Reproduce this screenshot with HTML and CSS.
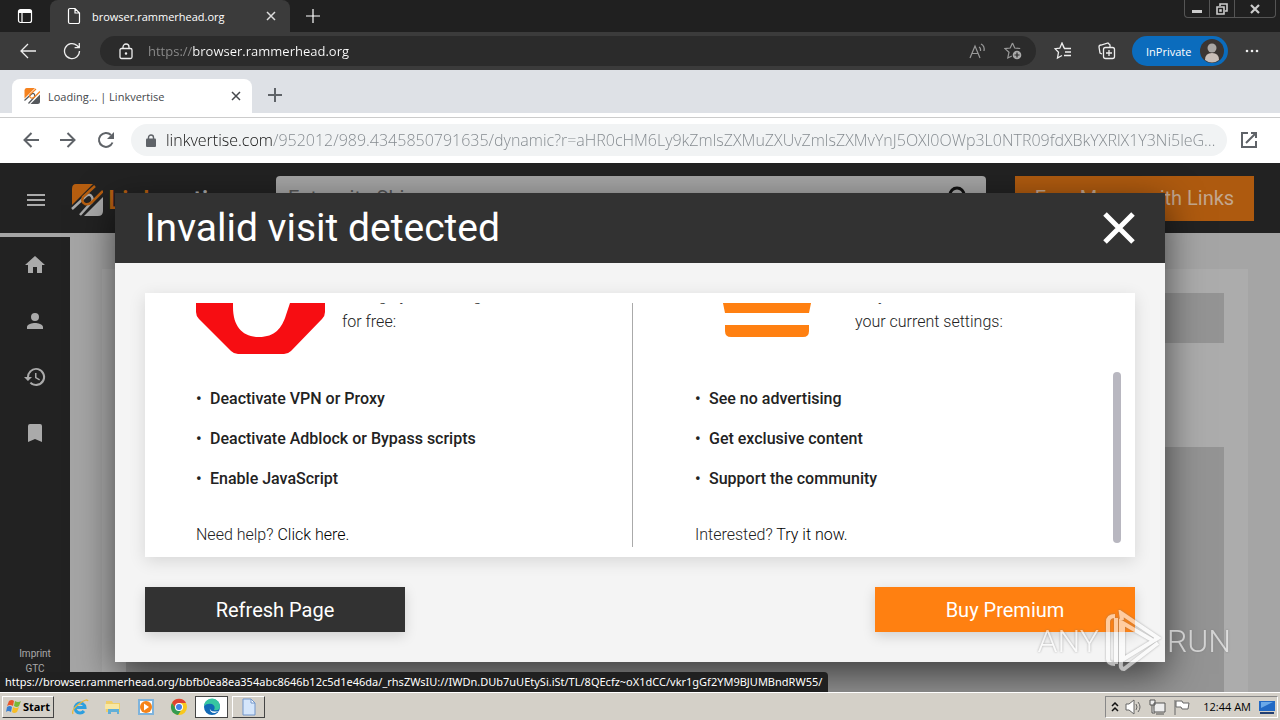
FILE: index.html
```
<!DOCTYPE html>
<html lang="en">
<head>
    <meta charset="UTF-8">
    <meta name="viewport" content="width=device-width, initial-scale=1.0">
    <title>Loading... | Linkvertise</title>
    <link rel="stylesheet" href="styles.css">
</head>
<body>

    <!-- Outer browser -->
    <div class="edge-tabs">
        <button class="edge-menu" aria-label="Tab actions">
            <svg width="16" height="16" viewBox="0 0 16 16" fill="none" stroke="#fff" stroke-width="1.2"><rect x="1.5" y="1.5" width="13" height="13" rx="2"/><path d="M2 3.5h12" stroke-width="3"/><path d="M5 5v9"/></svg>
        </button>
        <div class="edge-tab">
            <svg width="14" height="18" viewBox="0 0 14 18" fill="none" stroke="#fff" stroke-width="1.2"><path d="M1.5 3a1.5 1.5 0 0 1 1.500-1.500H8L12.500 6v9a1.500 1.500 0 0 1-1.500 1.500H3A1.500 1.500 0 0 1 1.500 15zM8 1.500V6h4.500"/></svg>
            <span class="tab-title">browser.rammerhead.org</span>
            <button aria-label="Close tab"><svg width="10" height="10" viewBox="0 0 10 10" stroke="#ddd" stroke-width="1.5"><path d="M1 1l8 8M9 1L1 9"/></svg></button>
        </div>
        <button class="edge-new" aria-label="New tab"><svg width="14" height="14" viewBox="0 0 14 14" stroke="#fff" stroke-width="1.2"><path d="M7 0v14M0 7h14"/></svg></button>
        <div class="window-buttons">
            <button aria-label="Minimize"><svg width="10" height="10" viewBox="0 0 10 10"><path d="M0 6h10v3H0z" fill="#ccc"/></svg></button>
            <button aria-label="Restore"><svg width="12" height="12" viewBox="0 0 12 12" fill="none" stroke="#ccc" stroke-width="1.6"><path d="M4 3V1h7v7H9"/><path d="M1 4h7v7H1z"/><path d="M4 7h1v1H4z"/></svg></button>
            <button class="window-close" aria-label="Close"><svg width="10" height="10" viewBox="0 0 10 10" stroke="#ccc" stroke-width="2.200"><path d="M1 1l8 8M9 1L1 9"/></svg></button>
        </div>
    </div>

    <div class="edge-bar">
        <button aria-label="Back"><svg width="18" height="16" viewBox="0 0 18 16" fill="none" stroke="#eee" stroke-width="1.300"><path d="M17 8H2M9 1L2 8l7 7"/></svg></button>
        <button aria-label="Reload"><svg width="18" height="18" viewBox="0 0 18 18" fill="none" stroke="#eee" stroke-width="1.300"><path d="M16.500 9A7.500 7.500 0 1 1 14 3.500L16 5.500M16.300 1v4.700h-4.700"/></svg></button>
        <div class="edge-address">
            <svg width="14" height="17" viewBox="0 0 14 17" fill="none" stroke="#eee" stroke-width="1.300"><rect x="1" y="5.500" width="12" height="10" rx="1.500"/><path d="M4 5.500V4a3 3 0 0 1 6 0v1.500"/><circle cx="7" cy="10.500" r=".6"/></svg>
            <input type="text" aria-label="Address" value="https://browser.rammerhead.org">
            <button aria-label="Read aloud"><svg width="17" height="16" viewBox="0 0 17 16" fill="none" stroke="#999" stroke-width="1.200"><path d="M1 15L6 3l5 12M3 10.500h6M10 4q2 1 1.500 4M12 1q4 2 3 7"/></svg></button>
            <button aria-label="Add to favorites"><svg width="18" height="18" viewBox="0 0 18 18" fill="none" stroke="#999" stroke-width="1.200"><path d="M8.500 1l2.200 5 5.500.5M8.500 1L6.200 6 1 6.600l4 3.600L3.800 16l4-2"/><circle cx="13" cy="13" r="4.300" fill="#aaa" stroke="none"/><path d="M13 10.500v5M10.500 13h5" stroke="#2b2b2b"/></svg></button>
        </div>
        <button aria-label="Favorites"><svg width="18" height="18" viewBox="0 0 18 18" fill="none" stroke="#eee" stroke-width="1.300"><path d="M10 6L8 1 5.800 6.200 1 6.700l3.500 3.600L3.500 16 8 13.500M8 1l2.500 5.500H17M11 10h6M10 13.500h7"/></svg></button>
        <button aria-label="Collections"><svg width="18" height="18" viewBox="0 0 18 18" fill="none" stroke="#eee" stroke-width="1.300"><path d="M4 12l-2-1L1 5q0-2 2-2l7-2 2 2v2"/><rect x="5.500" y="5.500" width="11" height="11" rx="2"/><path d="M11 8v6M8 11h6"/></svg></button>
        <button class="inprivate">InPrivate
            <svg width="24" height="24" viewBox="0 0 24 24"><circle cx="12" cy="12" r="12" fill="#3b3532"/><circle cx="12" cy="9" r="4.500" fill="#aaa6a3"/><path d="M5 21q0-7 7-7t7 7q-7 5-14 0" fill="#c9beb7"/></svg>
        </button>
        <button aria-label="Settings"><svg width="14" height="4" viewBox="0 0 14 4" fill="#eee"><circle cx="2" cy="2" r="1.300"/><circle cx="7" cy="2" r="1.300"/><circle cx="12" cy="2" r="1.300"/></svg></button>
    </div>

    <!-- Inner browser -->
    <div class="chrome-tabs">
        <div class="chrome-tab">
            <svg class="favicon" width="16" height="16" viewBox="0 0 32 32"><use href="#brand"/></svg>
            <span class="tab-title">Loading... | Linkvertise</span>
            <button aria-label="Close tab"><svg width="10" height="10" viewBox="0 0 10 10" stroke="#45484c" stroke-width="1.500"><path d="M1 1l8 8M9 1L1 9"/></svg></button>
        </div>
        <button class="chrome-new" aria-label="New tab"><svg width="14" height="14" viewBox="0 0 14 14" stroke="#5f6368" stroke-width="2"><path d="M7 0v14M0 7h14"/></svg></button>
    </div>
    <div class="chrome-bar">
        <button aria-label="Back"><svg width="16" height="16" viewBox="0 0 16 16" fill="none" stroke="#5f6368" stroke-width="2"><path d="M16 8H1.500M8.500 1l-7 7 7 7"/></svg></button>
        <button aria-label="Forward"><svg width="16" height="16" viewBox="0 0 16 16" fill="none" stroke="#5f6368" stroke-width="2"><path d="M0 8h14.500M7.500 1l7 7-7 7"/></svg></button>
        <button aria-label="Reload"><svg width="18" height="18" viewBox="0 0 18 18"><path d="M15.500 11.500A7 7 0 1 1 14 4" fill="none" stroke="#5f6368" stroke-width="2"/><path d="M17 1v7h-7z" fill="#5f6368"/></svg></button>
        <div class="chrome-address">
            <svg width="10" height="13" viewBox="0 0 10 13"><rect y="4.500" width="10" height="8.500" rx="1" fill="#5f6368"/><path d="M2.500 5V3.500a2.500 2.500 0 0 1 5 0V5" fill="none" stroke="#5f6368" stroke-width="1.400"/></svg>
            <input type="text" aria-label="Address" value="linkvertise.com/952012/989.4345850791635/dynamic?r=aHR0cHM6Ly9kZmlsZXMuZXUvZmlsZXMvYnJ5OXl0OWp3L0NTR09fdXBkYXRlX1Y3Ni5leGUvZmlsZXM">
        </div>
        <button aria-label="Open in new window"><svg width="18" height="18" viewBox="0 0 18 18" fill="none" stroke="#5f6368" stroke-width="2"><path d="M8 2H2v14h14v-6M11 2h5v5M16 2L6 12"/></svg></button>
    </div>

    <!-- Site -->
    <div class="site">
        <header class="site-header">
            <button class="menu" aria-label="Menu"><svg width="18" height="12" viewBox="0 0 18 12" fill="#aaa"><path d="M0 0h18v2H0zM0 5h18v2H0zM0 10h18v2H0z"/></svg></button>
            <a class="logo" href="#">
                <svg width="32" height="32" viewBox="0 0 32 32">
                    <g id="brand">
                        <path d="M5 0h17L1 21V5q0-5 4-5z" fill="var(--mark)"/>
                        <path d="M32 13v14q0 5-5 5H13z" fill="var(--mark-base)"/>
                        <path d="M1 25l14-13q4-3 6 1t-2 7L9 31" fill="none" stroke="var(--mark-base)" stroke-width="2.500"/>
                        <path d="M24 2L12 13q-2 5 2 7 4 1 7-2L32 7" fill="none" stroke="var(--mark)" stroke-width="2.500"/>
                    </g>
                </svg>
                <span>Linkver<span class="logo-light">tise</span></span>
            </a>
            <div class="search">
                <input type="search" aria-label="Search" placeholder="Enter site Shi ...">
                <svg width="20" height="24" viewBox="0 0 20 24" fill="none" stroke="#111" stroke-width="3"><circle cx="9" cy="9" r="7"/><path d="M14 14l5 5"/></svg>
            </div>
            <button class="earn">Earn Money with Links</button>
        </header>
        <div class="site-body">
            <nav class="sidebar">
                <a href="#" aria-label="Home"><svg width="24" height="24" viewBox="0 0 24 24"><path d="M10 20v-6h4v6h5v-8h3L12 3 2 12h3v8z"/></svg></a>
                <a href="#" aria-label="Profile"><svg width="24" height="24" viewBox="0 0 24 24"><path d="M12 12a4 4 0 1 0 0-8 4 4 0 0 0 0 8zm0 2c-2.700 0-8 1.300-8 4v2h16v-2c0-2.700-5.300-4-8-4z"/></svg></a>
                <a href="#" aria-label="History"><svg width="24" height="24" viewBox="0 0 24 24"><path d="M13 3a9 9 0 0 0-9 9H1l3.900 3.900.1.100L9 12H6a7 7 0 1 1 2.100 4.900l-1.400 1.400A9 9 0 1 0 13 3zm-1 5v5l4.300 2.500.7-1.200-3.500-2.100V8z"/></svg></a>
                <a href="#" aria-label="Bookmarks"><svg width="24" height="24" viewBox="0 0 24 24"><path d="M17 3H7a2 2 0 0 0-2 2v16l7-3 7 3V5a2 2 0 0 0-2-2z"/></svg></a>
                <div class="legal">
                    <a href="#">Imprint</a>
                    <a href="#">GTC</a>
                </div>
            </nav>
            <main class="content">
                <div class="panel">
                    <div class="skeleton skeleton-title"></div>
                    <div class="skeleton skeleton-body"></div>
                </div>
            </main>
        </div>

        <section class="modal" role="dialog" aria-labelledby="modal-title">
            <div class="modal-header">
                <h1 id="modal-title">Invalid visit detected</h1>
                <button aria-label="Close"><svg width="32" height="32" viewBox="0 0 32 32" stroke="#fff" stroke-width="5"><path d="M2 2l28 28M30 2L2 30"/></svg></button>
            </div>
            <div class="modal-body">
                <div class="card">
                    <div class="option">
                        <div class="intro">
                            <svg width="130" height="130" viewBox="0 0 130 130"><path d="M42 0h46l41 41v46q0 4-3 7L95 126q-3 3-7 3H42q-4 0-7-3L3 94q-3-3-3-7V41z" fill="#f70d12"/><path d="M37 30v52c0 20 10 30 26 30s23-9 27-22l20-60z" fill="#fff"/></svg>
                            <p>Change your settings<br>for free:</p>
                        </div>
                        <ul>
                            <li>Deactivate VPN or Proxy</li>
                            <li>Deactivate Adblock or Bypass scripts</li>
                            <li>Enable JavaScript</li>
                        </ul>
                        <p>Need help? <a href="#">Click here.</a></p>
                    </div>
                    <div class="option option-premium">
                        <div class="intro">
                            <svg width="144" height="130" viewBox="0 0 144 130" fill="#ff8011"><path d="M16 19l28 24 28-34 28 34 28-24-14 69H30z"/><path d="M30 100h84v6q0 6-6 6H36q-6 0-6-6z"/></svg>
                            <p>Stay with<br>your current settings:</p>
                        </div>
                        <ul>
                            <li>See no advertising</li>
                            <li>Get exclusive content</li>
                            <li>Support the community</li>
                        </ul>
                        <p>Interested? <a href="#">Try it now.</a></p>
                    </div>
                    <div class="scroll-thumb"></div>
                </div>
                <div class="actions">
                    <button class="refresh">Refresh Page</button>
                    <button class="premium">Buy Premium</button>
                </div>
            </div>
        </section>

        <div class="status">https://browser.rammerhead.org/bbfb0ea8ea354abc8646b12c5d1e46da/_rhsZWsIU://IWDn.DUb7uUEtySi.iSt/TL/8QEcfz~oX1dCC/vkr1gGf2YM9BJUMBndRW55/</div>
        <div class="watermark">
            <span>ANY</span>
            <svg width="58" height="62" viewBox="0 0 58 62" fill="none" stroke="#fff" stroke-width="4"><path d="M11 6Q4 6 4 12v37q0 5 7 5M12 8v46M19 12v38M18 10l-1-7L54 28 18 50M54 33L20 59q-4 0-3-6V12l31 18"/></svg>
            <span>RUN</span>
        </div>
    </div>

    <!-- Taskbar -->
    <footer class="taskbar">
        <button class="start"><svg width="16" height="16" viewBox="0 0 16 16"><path d="M3 2q3-2 5 0L7 7Q4 5 1 7z" fill="#e8562a"/><path d="M9 2q3 2 6 0l-2 5q-2 2-5 0z" fill="#79b837"/><path d="M1 8q3-2 5 0l-1 5q-3-2-5 0z" fill="#3a7fd0"/><path d="M7 8q3 2 6 0l-2 5q-3 2-5 0z" fill="#f7bd25"/></svg>Start</button>
        <button class="task" aria-label="Internet Explorer"><svg width="18" height="18" viewBox="0 0 18 18" fill="none"><path d="M4 9.500h10A5 5 0 1 0 13 13" stroke="#2e9fdf" stroke-width="3"/><path d="M2 16Q0 12 8 6t9-3" stroke="#eab83a" stroke-width="1.300"/></svg></button>
        <button class="task" aria-label="Explorer"><svg width="18" height="18" viewBox="0 0 18 18"><path d="M2 3h6l1 2h7v9H2z" fill="#f0ce68"/><path d="M1 6h14v5H1z" fill="#f8e7a3"/><path d="M4 16v-5h11v5h-2v-2H7v2z" fill="#62afd7"/></svg></button>
        <button class="task" aria-label="Media Player"><svg width="18" height="18" viewBox="0 0 18 18"><rect x="1" y="1" width="16" height="16" fill="#7eb3dc"/><rect x="3" y="3" width="12" height="12" fill="#fff"/><circle cx="9" cy="9" r="6" fill="#f58318"/><path d="M7 5.500l5 3.500-5 3.500z" fill="#fff"/></svg></button>
        <button class="task" aria-label="Chrome"><svg width="18" height="18" viewBox="0 0 18 18"><circle cx="9" cy="9" r="8" fill="#f9c81d"/><path d="M2 5a8 8 0 0 1 14 0H9L6 11z" fill="#df4332"/><path d="M2 5a8 8 0 0 0 6 12l4-6H6z" fill="#349b50"/><circle cx="9" cy="9" r="4" fill="#fff"/><circle cx="9" cy="9" r="3" fill="#4280e8"/></svg></button>
        <button class="task task-active" aria-label="Edge"><svg width="18" height="18" viewBox="0 0 18 18"><circle cx="9" cy="9" r="8" fill="#1269b7"/><path d="M1 8a8 8 0 0 1 16 1q-1 4-6 3 2-4-2-6-5-1-8 2z" fill="#37c6a1"/><path d="M7 9q-1 6 9 4l-4 2Q6 15 7 9z" fill="#fff"/></svg></button>
        <button class="task task-open" aria-label="Document"><svg width="16" height="18" viewBox="0 0 16 18"><path d="M2 1h8l4 4v12H2z" fill="#d5e6fb" stroke="#7095ca"/><path d="M10 1v4h4z" fill="#fff" stroke="#7095ca"/></svg></button>
        <div class="tray">
            <svg width="8" height="10" viewBox="0 0 8 10" fill="none" stroke="#111" stroke-width="1.500"><path d="M1 4l3-3 3 3M1 9l3-3 3 3"/></svg>
            <svg width="18" height="16" viewBox="0 0 18 16" fill="#fff" stroke="#666"><path d="M1 5h3l5-4v14l-5-4H1z"/><path d="M11 5q2 3 0 6M13 3q4 5 0 10" fill="none"/></svg>
            <svg width="18" height="16" viewBox="0 0 18 16" fill="#eee" stroke="#555"><path d="M5 4h11v9H5zM7 15h8M1 1h5v5H1zM3 6v8h3"/></svg>
            <svg width="18" height="16" viewBox="0 0 18 16" fill="#fff" stroke="#666"><path d="M2 1v15M3 2h6l1 2h6l-1 6H9L8 8H3z"/></svg>
            <span class="clock">12:44 AM</span>
            <svg width="16" height="14" viewBox="0 0 16 14"><path d="M0 1h16v10H0z" fill="#2169c5"/><path d="M2 2h12L2 8z" fill="#69a8e9"/><path d="M1 12h14v2H1z" fill="#223f72"/></svg>
        </div>
    </footer>

</body>
</html>
```
FILE: styles.css
```
/* Global Styles */
* {
    box-sizing: border-box;
}

body {
    display: flex;
    flex-direction: column;
    height: 100vh;
    margin: 0;
    font-family: "Open Sans", "Noto Sans", sans-serif;
    font-size: 11px;
    overflow: hidden;
}

button, input {
    font: inherit;
    color: inherit;
    border: none;
    background: none;
    padding: 0;
    outline: none;
}

button {
    display: flex;
    align-items: center;
    justify-content: center;
    flex-shrink: 0;
}

svg {
    display: block;
    flex-shrink: 0;
}

a {
    color: inherit;
    text-decoration: none;
}

.tab-title {
    flex: 1;
    white-space: nowrap;
}

/* Outer browser */
.edge-tabs {
    display: flex;
    flex-shrink: 0;
    height: 32px;
    background: #202020;
    color: #fff;
}

.edge-menu {
    width: 50px;
}

.edge-tab {
    display: flex;
    align-items: center;
    gap: 11px;
    width: 240px;
    padding: 0 14px 0 17px;
    background: #3b3b3b;
    border-radius: 8px 8px 0 0;
}

.edge-new {
    width: 46px;
}

.window-buttons {
    display: flex;
    height: 18px;
    margin: 0 4px 0 auto;
    border: 1px solid #555;
    border-top: none;
    border-radius: 0 0 4px 4px;
}

.window-buttons button {
    width: 25px;
    border-right: 1px solid #555;
}

.window-buttons .window-close {
    width: 40px;
    border-right: none;
}

.edge-bar {
    display: flex;
    flex-shrink: 0;
    align-items: center;
    gap: 26px;
    height: 38px;
    padding: 0 21px 0 19px;
    background: #3b3b3b;
    color: #fff;
}

.edge-address {
    display: flex;
    flex: 1;
    align-items: center;
    gap: 18px;
    height: 30px;
    margin: 0 -8px 0 -7px;
    padding: 0 14px 0 19px;
    border-radius: 15px;
    background: #2b2b2b;
}

.edge-address input {
    flex: 1;
    min-width: 0;
    margin-left: -3px;
    font-size: 13px;
    color: transparent;
    background: linear-gradient(90deg, #8c8c8c 45px, #fff 45px);
    -webkit-background-clip: text;
    background-clip: text;
}

.inprivate {
    justify-content: space-between;
    width: 96px;
    height: 30px;
    margin: 0 -9px 0 -10px;
    padding: 0 4px 0 14px;
    border-radius: 15px;
    background: #0b6cbd;
}

/* Inner browser */
.chrome-tabs {
    display: flex;
    flex-shrink: 0;
    align-items: flex-end;
    height: 43px;
    padding-left: 12px;
    background: #dee1e6;
    color: #45484c;
}

.chrome-tab {
    display: flex;
    align-items: center;
    gap: 8px;
    width: 240px;
    height: 34px;
    padding: 0 11px 0 12px;
    background: #fff;
    border-radius: 8px 8px 0 0;
}

.favicon {
    --mark: #f5821f;
    --mark-base: #55585c;
}

.chrome-new {
    width: 46px;
    height: 36px;
}

.chrome-bar {
    display: flex;
    flex-shrink: 0;
    align-items: center;
    gap: 21px;
    height: 50px;
    padding: 0 22px 0 23px;
    border-top: 4px solid #fff;
    background: #fff;
    box-shadow: inset 0 1px #ccc;
}

.chrome-address {
    display: flex;
    flex: 1;
    align-items: center;
    gap: 10px;
    height: 32px;
    margin: 0 -8px 0 -5px;
    padding: 0 8px 0 15px;
    border-radius: 16px;
    background: #f1f3f4;
}

.chrome-address input {
    flex: 1;
    min-width: 0;
    font-size: 16px;
    font-weight: 300;
    color: transparent;
    text-overflow: ellipsis;
    background: linear-gradient(90deg, #111 106px, #80868b 106px);
    -webkit-background-clip: text;
    background-clip: text;
}

/* Site */
.site {
    position: relative;
    display: flex;
    flex: 1;
    flex-direction: column;
    min-height: 0;
    background: #a5a5a5;
    font-family: Roboto, sans-serif;
    overflow: hidden;
}

.site-header {
    display: flex;
    flex-shrink: 0;
    align-items: center;
    height: 70px;
    padding: 0 26px 0 27px;
    background: #222;
}

.menu, .logo {
    margin-top: 4px;
}

.logo {
    --mark: #b65e10;
    --mark-base: #a9a9a9;
    display: flex;
    align-items: center;
    gap: 5px;
    width: 205px;
    margin-left: 26px;
    font-size: 26px;
    font-weight: 500;
    color: #b65e10;
}

.logo-light {
    color: #aaa;
}

.search {
    display: flex;
    flex: 1;
    align-items: center;
    height: 44px;
    margin-right: 29px;
    padding: 0 18px 0 12px;
    border-radius: 4px;
    background: #a5a5a5;
}

.search input {
    flex: 1;
    font-size: 20px;
}

.search input::placeholder {
    color: #555;
}

.earn {
    width: 239px;
    height: 45px;
    background: #ae5a0f;
    color: #c3a78e;
    font-size: 20px;
}

.site-body {
    display: flex;
    flex: 1;
    min-height: 0;
}

.sidebar {
    display: flex;
    flex-direction: column;
    align-items: center;
    gap: 32px;
    width: 70px;
    margin-top: 4px;
    padding: 16px 0;
    background: #222;
    fill: #aaa;
}

.legal {
    display: flex;
    flex-direction: column;
    align-items: center;
    margin-top: auto;
    color: #aaa;
    font-size: 10px;
    line-height: 15px;
}

.content {
    display: flex;
    flex: 1;
    padding: 36px 32px 0;
}

.panel {
    display: flex;
    flex: 1;
    flex-direction: column;
    gap: 104px;
    padding: 24px 24px 0;
    background: #acacac;
}

.skeleton {
    background: #949494;
}

.skeleton-title {
    height: 50px;
}

.skeleton-body {
    flex: 1;
}

/* Modal */
.modal {
    position: absolute;
    top: 30px;
    left: 115px;
    right: 115px;
    background: #f4f4f4;
    color: #222;
    box-shadow: 0 12px 36px rgba(0, 0, 0, 0.6);
}

.modal-header {
    display: flex;
    align-items: center;
    justify-content: space-between;
    height: 70px;
    padding: 0 30px;
    background: #323232;
    color: #fff;
}

.modal-header h1 {
    margin: 0;
    font-size: 39px;
    font-weight: 400;
}

.modal-body {
    padding: 30px;
}

.card {
    position: relative;
    display: flex;
    height: 264px;
    padding: 10px;
    background: #fff;
    box-shadow: 0 4px 16px rgba(0, 0, 0, 0.12);
    font-size: 16px;
    line-height: 24px;
}

.option {
    display: flex;
    flex-direction: column;
    justify-content: flex-end;
    gap: 24px;
    width: 478px;
    padding-left: 41px;
    border-right: 1px solid #aaa;
    font-weight: 300;
    overflow: hidden;
}

.option-premium {
    flex: 1;
    padding-left: 62px;
    border-right: none;
}

.option p {
    margin: 0;
}

.option a {
    color: #000;
}

.intro {
    display: flex;
    align-items: flex-end;
    gap: 16px;
}

.intro p {
    padding-bottom: 20px;
    line-height: 26px;
}

.option ul {
    margin: 0;
    padding: 0;
    list-style: none;
    font-weight: 500;
    line-height: 40px;
}

.option li::before {
    content: "•";
    display: inline-block;
    width: 14px;
}

.scroll-thumb {
    position: absolute;
    right: 14px;
    bottom: 14px;
    width: 8px;
    height: 171px;
    border-radius: 4px;
    background: #b8b7c0;
}

.actions {
    display: flex;
    justify-content: space-between;
    margin-top: 30px;
}

.actions button {
    width: 260px;
    height: 45px;
    color: #fff;
    font-size: 20px;
    box-shadow: 0 4px 12px rgba(0, 0, 0, 0.15);
}

.actions .refresh {
    background: #323232;
}

.actions .premium {
    background: #ff8011;
}

.status {
    position: absolute;
    left: 0;
    bottom: 0;
    height: 20px;
    padding: 0 6px 0 5px;
    border-radius: 0 4px 0 0;
    background: #202020;
    color: #fff;
    font-family: "Noto Sans", sans-serif;
    font-size: 11px;
    line-height: 19px;
    white-space: nowrap;
}

.watermark {
    position: absolute;
    right: 49px;
    bottom: 20px;
    display: flex;
    align-items: center;
    gap: 5px;
    color: #fff;
    font-size: 32px;
    font-weight: 300;
    opacity: 0.6;
    filter: drop-shadow(0 0 1px #777);
}

/* Taskbar */
.taskbar {
    display: flex;
    flex-shrink: 0;
    align-items: center;
    height: 28px;
    padding: 0 2px;
    border-top: 1px solid #fff;
    background: #d4d0c8;
    color: #000;
}

.start {
    gap: 1px;
    width: 52px;
    height: 22px;
    margin-right: 9px;
    border: 1px solid #fff;
    border-right-color: #444;
    border-bottom-color: #444;
    font-weight: 700;
}

.task {
    width: 33px;
    height: 22px;
}

.task-active {
    background: #fff;
    border: 1px solid #444;
}

.task-open {
    margin-left: 4px;
    border: 1px solid #fff;
    border-right-color: #444;
    border-bottom-color: #444;
}

.tray {
    display: flex;
    align-items: center;
    gap: 6px;
    height: 22px;
    margin-left: auto;
    padding: 0 2px 0 5px;
    border: 1px solid #888;
    border-right-color: #fff;
    border-bottom-color: #fff;
}

.clock {
    margin: 0 2px 0 6px;
}
```
